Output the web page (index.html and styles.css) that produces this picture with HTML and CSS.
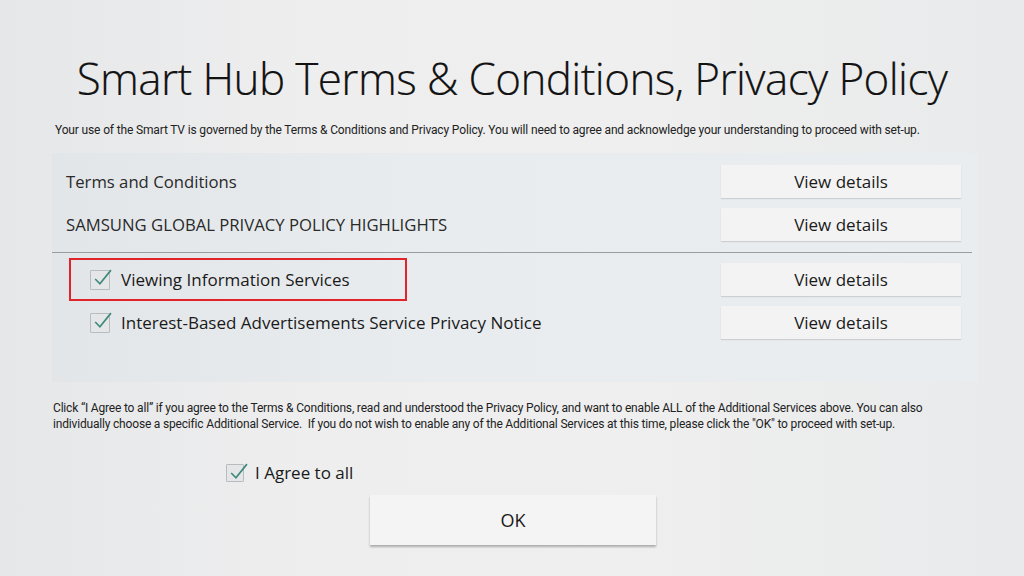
FILE: index.html
```html
<!DOCTYPE html>
<html lang="en">
<head>
<meta charset="utf-8">
<title>Smart Hub Terms &amp; Conditions, Privacy Policy</title>
<link rel="stylesheet" href="styles.css">
</head>
<body>
<div class="screen">
  <h1 class="title">Smart Hub Terms &amp; Conditions, Privacy Policy</h1>
  <p class="intro">Your use of the Smart TV is governed by the Terms &amp; Conditions and Privacy Policy. You will need to agree and acknowledge your understanding to proceed with set-up.</p>

  <div class="panel">
    <div class="row">
      <span class="label">Terms and Conditions</span>
      <button class="details">View details</button>
    </div>
    <div class="row">
      <span class="label">SAMSUNG GLOBAL PRIVACY POLICY HIGHLIGHTS</span>
      <button class="details">View details</button>
    </div>
    <div class="divider"></div>
    <div class="row">
      <span class="check-item">
        <span class="box"><svg viewBox="0 0 20 20" class="tick"><path d="M4 10.5 L8.5 15 L19 2"/></svg></span>
        <span class="check-label">Viewing Information Services</span>
      </span>
      <button class="details">View details</button>
      <span class="highlight"></span>
    </div>
    <div class="row">
      <span class="check-item">
        <span class="box"><svg viewBox="0 0 20 20" class="tick"><path d="M4 10.5 L8.5 15 L19 2"/></svg></span>
        <span class="check-label">Interest-Based Advertisements Service Privacy Notice</span>
      </span>
      <button class="details">View details</button>
    </div>
  </div>

  <p class="note">Click “I Agree to all” if you agree to the Terms &amp; Conditions, read and understood the Privacy Policy, and want to enable ALL of the Additional Services above. You can also individually choose a specific Additional Service.&nbsp; If you do not wish to enable any of the Additional Services at this time, please click the "OK" to proceed with set-up.</p>

  <div class="agree">
    <span class="box small"><svg viewBox="0 0 20 20" class="tick"><path d="M4 10.5 L8.5 15 L19 2"/></svg></span>
    <span class="agree-label">I Agree to all</span>
  </div>

  <div class="actions">
    <button class="ok">OK</button>
  </div>
</div>
</body>
</html>
```

FILE: styles.css
```css
* { box-sizing: border-box; }
html, body { margin: 0; padding: 0; }
body {
  width: 1024px;
  height: 576px;
  overflow: hidden;
  font-family: "Open Sans", "Noto Sans", sans-serif;
  color: #1e1e1e;
  background: linear-gradient(90deg, #e6e7e8 0%, #eeeeef 30%, #efefef 60%, #e9eaeb 100%);
}
.screen {
  width: 1024px;
  height: 576px;
  padding-top: 49px;
  display: flex;
  flex-direction: column;
}
.title {
  margin: 0;
  text-align: center;
  font-weight: 300;
  font-size: 44px;
  line-height: 58px;
  letter-spacing: -0.6px;
  color: #121212;
  -webkit-text-stroke: 0.2px #121212;
}
.intro {
  margin: 15px 0 0 55px;
  font-family: Roboto, "Open Sans", sans-serif;
  font-size: 12px;
  line-height: 16px;
  letter-spacing: -0.15px;
  color: #222;
}
.panel {
  position: relative;
  margin: 15px 0 0 52px;
  width: 926px;
  height: 229px;
  padding: 12px 17px 0 14px;
  background: linear-gradient(90deg, #e3e6e9 0%, #e9ecee 40%, #eaedef 100%);
  display: flex;
  flex-direction: column;
  gap: 10px;
}
.row {
  position: relative;
  display: flex;
  align-items: center;
  justify-content: space-between;
  height: 33px;
}
.label {
  font-family: "Open Sans", sans-serif;
  font-size: 16.7px;
  color: #2a2a2a;
}
.divider {
  height: 1px;
  margin: 1px -11px 0 -14px;
  background: #9a9c9e;
}
.details {
  width: 240px;
  height: 33px;
  border: 0;
  padding: 0;
  background: #f3f3f3;
  box-shadow: 0 1px 1px rgba(0,0,0,0.12);
  font-family: "Open Sans", sans-serif;
  font-size: 17px;
  color: #1a1a1a;
}
.check-item {
  display: flex;
  align-items: center;
  gap: 11px;
  margin-left: 24px;
}
.box {
  position: relative;
  width: 20px;
  height: 20px;
  border: 1px solid #b9bcbe;
  background: #e4e6e7;
  border-radius: 1px;
}
.box.small { width: 18px; height: 18px; }
.tick {
  position: absolute;
  left: 0;
  top: -3px;
  width: 21px;
  height: 21px;
  fill: none;
  stroke: #3f8a7c;
  stroke-width: 1.6;
}
.check-label {
  font-family: "Open Sans", sans-serif;
  font-weight: 500;
  font-size: 17px;
  color: #1a1a1a;
}
.highlight {
  position: absolute;
  left: 3px;
  top: -5px;
  width: 338px;
  height: 43px;
  border: 2px solid #e0242a;
}
.note {
  margin: 18px 0 0 53px;
  width: 875px;
  font-family: Roboto, "Open Sans", sans-serif;
  font-size: 12px;
  line-height: 16px;
  letter-spacing: -0.18px;
  color: #222;
}
.agree {
  display: flex;
  align-items: center;
  gap: 11px;
  margin: 29px 0 0 226px;
}
.agree-label {
  font-family: "Open Sans", sans-serif;
  font-size: 17px;
  color: #1a1a1a;
}
.actions {
  margin: 11px 0 0 370px;
}
.ok {
  width: 286px;
  height: 50px;
  border: 0;
  background: #f4f4f4;
  box-shadow: 0 2px 2px rgba(0,0,0,0.28);
  font-family: "Open Sans", sans-serif;
  font-size: 18px;
  color: #1a1a1a;
}
```
